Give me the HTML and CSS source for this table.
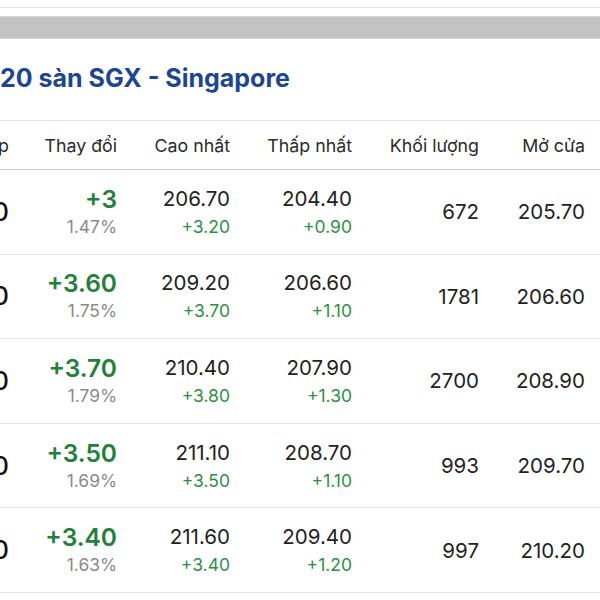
FILE: index.html
```html
<!DOCTYPE html>
<html lang="vi">
<head>
<meta charset="utf-8">
<link rel="stylesheet" href="styles.css">
</head>
<body>
<div class="page">
  <div class="topline"></div>
  <div class="band"></div>
  <h2 class="title">20 sàn SGX - Singapore</h2>
  <div class="table">
    <div class="row head">
      <div class="c">Giá khớp</div>
      <div class="c">Thay đổi</div>
      <div class="c">Cao nhất</div>
      <div class="c">Thấp nhất</div>
      <div class="c">Khối lượng</div>
      <div class="c">Mở cửa</div>
    </div>
    <div class="row">
      <div class="c big">205.90</div>
      <div class="c"><span class="chg">+3</span><span class="pct">1.47%</span></div>
      <div class="c"><span class="val">206.70</span><span class="sub">+3.20</span></div>
      <div class="c"><span class="val">204.40</span><span class="sub">+0.90</span></div>
      <div class="c num">672</div>
      <div class="c num">205.70</div>
    </div>
    <div class="row">
      <div class="c big">206.60</div>
      <div class="c"><span class="chg">+3.60</span><span class="pct">1.75%</span></div>
      <div class="c"><span class="val">209.20</span><span class="sub">+3.70</span></div>
      <div class="c"><span class="val">206.60</span><span class="sub">+1.10</span></div>
      <div class="c num">1781</div>
      <div class="c num">206.60</div>
    </div>
    <div class="row">
      <div class="c big">210.20</div>
      <div class="c"><span class="chg">+3.70</span><span class="pct">1.79%</span></div>
      <div class="c"><span class="val">210.40</span><span class="sub">+3.80</span></div>
      <div class="c"><span class="val">207.90</span><span class="sub">+1.30</span></div>
      <div class="c num">2700</div>
      <div class="c num">208.90</div>
    </div>
    <div class="row">
      <div class="c big">210.50</div>
      <div class="c"><span class="chg">+3.50</span><span class="pct">1.69%</span></div>
      <div class="c"><span class="val">211.10</span><span class="sub">+3.50</span></div>
      <div class="c"><span class="val">208.70</span><span class="sub">+1.10</span></div>
      <div class="c num">993</div>
      <div class="c num">209.70</div>
    </div>
    <div class="row last">
      <div class="c big">211.00</div>
      <div class="c"><span class="chg">+3.40</span><span class="pct">1.63%</span></div>
      <div class="c"><span class="val">211.60</span><span class="sub">+3.40</span></div>
      <div class="c"><span class="val">209.40</span><span class="sub">+1.20</span></div>
      <div class="c num">997</div>
      <div class="c num">210.20</div>
    </div>
  </div>
</div>
</body>
</html>
```

FILE: styles.css
```css
html, body {
  margin: 0;
  padding: 0;
  background: #ffffff;
  overflow: hidden;
}
body {
  font-family: Inter, "Noto Sans", sans-serif;
  color: #222;
}
.page {
  width: 600px;
  height: 600px;
  overflow: hidden;
  padding-top: 7px;
  box-sizing: border-box;
}
.topline {
  height: 1px;
  background: #e6e6e6;
}
.band {
  margin-top: 8px;
  height: 21px;
  background: #c3c3c3;
  border-top: 1px solid #d8d8d8;
  border-bottom: 1px solid #d8d8d8;
}
.title {
  margin: 0;
  height: 82px;
  line-height: 78px;
  font-size: 25px;
  font-weight: 700;
  color: #1d4690;
  border-bottom: 1px solid #e6e6e6;
  box-sizing: border-box;
}
.table {
  margin-left: -100px;
  width: 700px;
}
.row {
  display: grid;
  grid-template-columns: 109px 108px 113px 122px 127px 106px;
  height: 84.6px;
  border-bottom: 1px solid #e4e4e4;
  box-sizing: border-box;
}
.row.head {
  height: 49px;
  border-bottom: 1px solid #cfcfcf;
}
.head .c {
  font-size: 17.8px;
  color: #2a2a2a;
  justify-content: center;
}
.c {
  display: flex;
  flex-direction: column;
  align-items: flex-end;
  justify-content: center;
  text-align: right;
}
.big {
  font-size: 25px;
  font-weight: 500;
  color: #111;
}
.num {
  font-size: 20.5px;
  color: #222;
}
.chg {
  font-size: 24.5px;
  font-weight: 600;
  color: #22803a;
  line-height: 30px;
}
.pct {
  font-size: 17.4px;
  color: #8a8a8a;
  line-height: 26px;
}
.val {
  font-size: 20.5px;
  color: #222;
  line-height: 30px;
}
.sub {
  font-size: 17.5px;
  color: #2f8f45;
  line-height: 26px;
}
```
